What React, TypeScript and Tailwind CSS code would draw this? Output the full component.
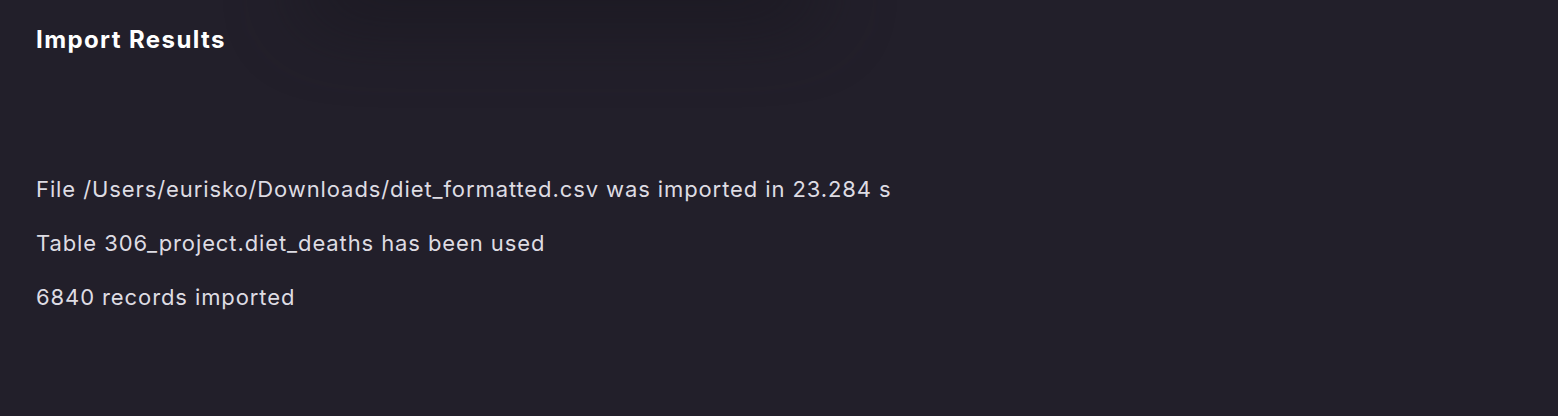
import React from 'react';

const lines = [
  'File /Users/eurisko/Downloads/diet_formatted.csv was imported in 23.284 s',
  'Table 306_project.diet_deaths has been used',
  '6840 records imported',
];

export default function App() {
  return (
    <div
      className="relative h-[416px] w-full overflow-hidden bg-[#221f2a] px-9 text-[#dedce3]"
      style={{ fontFamily: 'Inter, "Noto Sans", sans-serif' }}
    >
      {/* faint shadow cast by the window above */}
      <div className="pointer-events-none absolute left-[300px] top-[-40px] h-[60px] w-[520px] rounded-full bg-[#15131a] opacity-60 blur-2xl" />
      <h1 className="relative pt-[26px] text-[24px] font-bold leading-7 tracking-[1.4px] text-white">Import Results</h1>
      <div className="relative mt-[121px] flex flex-col gap-[26px]">
        {lines.map((line) => (
          <p key={line} className="text-[22px] leading-7 tracking-[0.9px]">
            {line}
          </p>
        ))}
      </div>
    </div>
  );
}
